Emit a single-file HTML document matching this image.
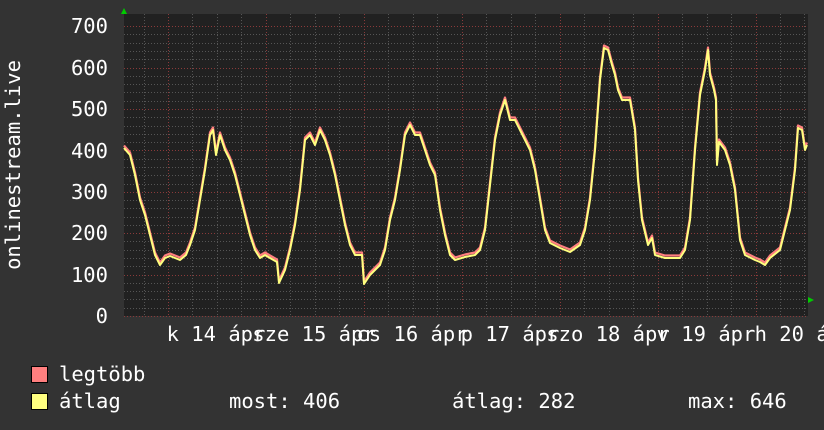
<!DOCTYPE html>
<html><head><meta charset="utf-8"><style>
html,body{margin:0;padding:0;background:#333;width:824px;height:430px;overflow:hidden}
svg{display:block}
text{font-family:"DejaVu Sans Mono","Liberation Mono",monospace;fill:#fff;font-size:20.5px}
</style></head><body>
<svg width="824" height="430" viewBox="0 0 824 430" xmlns="http://www.w3.org/2000/svg">
<rect width="824" height="430" fill="#333"/>
<rect x="124" y="14" width="684" height="302" fill="#212121"/>
<g id="grid" stroke-width="1" fill="none"></g>
<polygon points="121,14 127,14 124,8" fill="#0c0"/>
<polygon points="808,297 808,303 814,300" fill="#0c0"/>
<polyline id="mx" fill="none" stroke="#ff7f7f" stroke-width="2.2" stroke-linejoin="round"/>
<polyline id="av" fill="none" stroke="#ffff7f" stroke-width="2" stroke-linejoin="round"/>
<g text-anchor="end">
<text x="108" y="33">700</text><text x="108" y="75">600</text><text x="108" y="116">500</text>
<text x="108" y="158">400</text><text x="108" y="199">300</text><text x="108" y="240">200</text>
<text x="108" y="282">100</text><text x="108" y="323">0</text>
</g>
<text transform="translate(20,165) rotate(-90)" text-anchor="middle">onlinestream.live</text>
<g text-anchor="middle">
<text x="216" y="341">k 14 ápr</text><text x="314" y="341">sze 15 ápr</text>
<text x="412" y="341">cs 16 ápr</text><text x="510" y="341">p 17 ápr</text>
<text x="608" y="341">szo 18 ápr</text><text x="706" y="341">v 19 ápr</text>
<text x="804" y="341">h 20 ápr</text>
</g>
<rect x="31.5" y="366.5" width="16" height="16" fill="#ff7f7f" stroke="#000"/>
<rect x="31.5" y="393.5" width="16" height="16" fill="#ffff7f" stroke="#000"/>
<text x="59" y="381">legtöbb</text>
<text x="59" y="408">átlag</text>
<text x="229" y="408">most: 406</text>
<text x="452" y="408">átlag: 282</text>
<text x="688" y="408">max: 646</text>
</svg>
<script>
var g=document.getElementById('grid'),ns='http://www.w3.org/2000/svg',h='';
for(var v=0;v<=700;v+=20){var y=Math.round(316-v*0.414)+0.5;var maj=v%100==0;
h+='<line x1="124" x2="808" y1="'+y+'" y2="'+y+'" stroke="'+(maj?'#8a3a3a':'#555')+'" stroke-dasharray="1,2"/>';}
for(var x=143.5;x<808;x+=24.48){var X=Math.round(x)+0.5;var maj=Math.abs(((x-168)/97.9)-Math.round((x-168)/97.9))<0.05;
h+='<line y1="14" y2="316" x1="'+X+'" x2="'+X+'" stroke="'+(maj?'#8a3a3a':'#555')+'" stroke-dasharray="1,2"/>';}
g.innerHTML=h;
var p=[[124,148],[130,155],[135,175],[140,200],[145,215],[150,235],[155,255],[160,265],[165,258],[170,256],[180,260],[186,255],[190,245],[195,230],[200,200],[205,170],[210,135],[213,130],[216,155],[220,135],[225,150],[230,160],[235,175],[240,195],[245,215],[250,235],[255,250],[260,258],[265,255],[270,258],[277,262],[279,283],[285,270],[290,250],[295,225],[300,190],[305,140],[310,135],[315,145],[320,130],[325,140],[330,155],[335,175],[340,200],[345,225],[350,245],[355,255],[362,255],[364,284],[370,275],[380,265],[385,250],[390,220],[395,200],[400,170],[405,135],[410,125],[415,135],[420,135],[425,150],[430,165],[435,175],[440,210],[445,235],[450,255],[455,260],[465,257],[475,255],[480,250],[485,230],[490,185],[495,140],[500,115],[505,100],[510,120],[515,120],[520,130],[525,140],[530,150],[535,170],[540,200],[545,230],[550,243],[560,248],[570,252],[580,245],[585,230],[590,200],[595,150],[600,80],[604,48],[608,50],[612,65],[615,75],[618,90],[622,100],[630,100],[635,130],[638,180],[642,220],[648,245],[652,238],[655,255],[665,258],[680,258],[685,250],[690,220],[695,150],[700,95],[705,70],[708,50],[710,75],[714,90],[716,100],[717,165],[719,142],[725,150],[730,165],[735,190],[740,240],[745,255],[755,260],[760,262],[765,265],[770,258],[780,250],[785,230],[790,210],[795,170],[798,128],[802,130],[805,150],[807,145]];
document.getElementById('av').setAttribute('points',p.map(function(a){return a.join(',')}).join(' '));
document.getElementById('mx').setAttribute('points',p.map(function(a){return a[0]+','+(a[1]-2.5)}).join(' '));
</script>
</body></html>
